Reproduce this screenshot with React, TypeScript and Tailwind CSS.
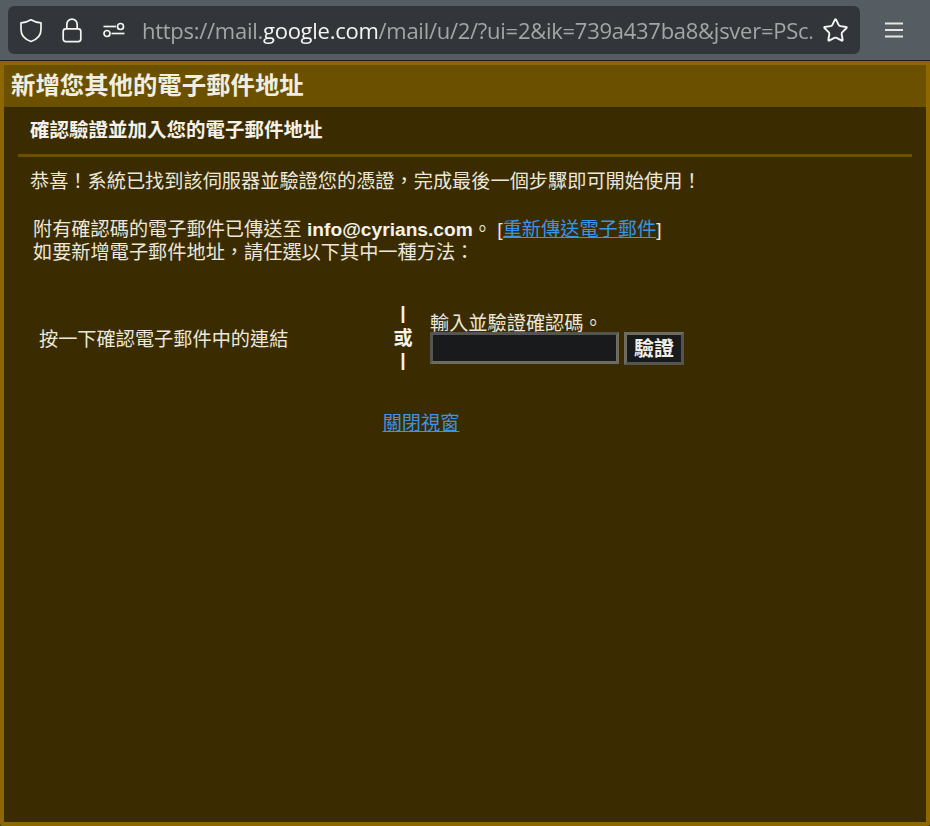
import { Star } from "lucide-react";

function ShieldIcon() {
  return (
    <svg width="24" height="25" viewBox="0 0 24 25" fill="none" stroke="currentColor" strokeWidth="1.7" strokeLinejoin="round">
      <path d="M12 1.800c3 1.900 6.200 2.800 10 3.100v6.600c0 5.800-3.600 9.800-10 12-6.400-2.200-10-6.200-10-12V4.900c3.800-.3 7-1.200 10-3.100z" />
    </svg>
  );
}

function LockIcon() {
  return (
    <svg width="20" height="25" viewBox="0 0 20 25" fill="none" stroke="currentColor" strokeWidth="1.7" strokeLinejoin="round">
      <rect x="1.200" y="10.800" width="17.600" height="12.800" rx="2.500" />
      <path d="M4.800 10.800V6.400a5.200 5.200 0 0 1 10.400 0v4.400" />
    </svg>
  );
}

function PermissionsIcon() {
  return (
    <svg width="22" height="16" viewBox="0 0 22 16" fill="none" stroke="currentColor" strokeWidth="1.700">
      <path d="M0.500 4.500h12.500" />
      <circle cx="17.500" cy="4.500" r="3" />
      <circle cx="4" cy="11.500" r="3" />
      <path d="M8.500 11.500h13" />
    </svg>
  );
}

function MenuIcon() {
  return (
    <svg width="18" height="16" viewBox="0 0 18 16" fill="none" stroke="currentColor" strokeWidth="1.900">
      <path d="M0 1.500h18M0 8h18M0 14.500h18" />
    </svg>
  );
}

function BrowserBar() {
  return (
    <div className="h-[60px] bg-[#565d62] flex items-center pl-2 pr-[26px] border-b border-[#1c1f21] box-content">
      <div className="w-[852px] h-[48px] bg-[#32363a] rounded-md flex items-center pl-[11px] pr-[11px] text-[#f4f4f0]">
        <ShieldIcon />
        <span className="ml-[19px]"><LockIcon /></span>
        <span className="ml-[21px]"><PermissionsIcon /></span>
        <div className="ml-[17px] flex-1 overflow-hidden whitespace-nowrap text-[22px] tracking-[-0.27px] text-[#a3a5a6] font-['Open_Sans',sans-serif] [mask-image:linear-gradient(to_left,transparent,black_8px)]">
          https://mail.<span className="text-[#f4f4f4]">google.com</span>/mail/u/2/?ui=2&amp;ik=739a437ba8&amp;jsver=PSc.
        </div>
        <Star size={27} strokeWidth={1.700} className="ml-[4px] shrink-0" />
      </div>
      <span className="ml-[25px] text-[#e6e6e2]"><MenuIcon /></span>
    </div>
  );
}

export default function App() {
  return (
    <div className="w-[930px] h-[826px] overflow-hidden bg-[#33383c] font-['Liberation_Sans','Noto_Sans_CJK_TC',sans-serif]">
      <BrowserBar />
      <div className="h-[765px] border-4 border-[#8f6700] rounded-b-[3px] bg-[#3a2c00] text-[#ebe7dc] flex flex-col">
        <h1 className="h-[42px] bg-[#6b5000] flex items-center pl-[7px] text-[24.4px] font-bold text-[#f0eee2]">
          新增您其他的電子郵件地址
        </h1>
        <div className="pl-[14px] pr-[14px]">
          <h2 className="h-[50px] pl-3 flex items-center border-b-[3px] border-[#6b5000] text-[19.5px] font-bold text-[#f4f2ea]">
            確認驗證並加入您的電子郵件地址
          </h2>
          <p className="pl-3 mt-[12px] text-[19.2px] leading-[26px]">
            恭喜！系統已找到該伺服器並驗證您的憑證，完成最後一個步驟即可開始使用！
          </p>
          <div className="pl-[15px] mt-[23px] text-[19.2px] leading-[23px]">
            <p>
              附有確認碼的電子郵件已傳送至 <b className="text-[#f4f2ea]">info@cyrians.com</b>。 [
              <a href="#" className="text-[#3b94e6] underline">重新傳送電子郵件</a>]
            </p>
            <p>如要新增電子郵件地址，請任選以下其中一種方法：</p>
          </div>
          <div className="mt-[38px] flex items-start">
            <div className="w-[375px] pl-[21px] mt-[26px] text-[19.2px] leading-[24px]">按一下確認電子郵件中的連結</div>
            <div className="w-[20px] flex flex-col items-center text-[19.2px] font-bold text-[#f4f2ea]">
              <span className="leading-[22px]">|</span>
              <span className="leading-[29px]">或</span>
              <span className="leading-[13px]">|</span>
            </div>
            <div className="ml-[17px] mt-[13px]">
              <div className="text-[19.2px] leading-[17px]">輸入並驗證確認碼。</div>
              <div className="flex items-start">
                <input className="w-[189px] h-[32px] bg-[#181a1c] border-[3px] border-t-[#55554f] border-l-[#55554f] border-r-[#6e6c62] border-b-[#6e6c62] outline-none" />
                <button className="ml-[5px] w-[60px] h-[33px] bg-[#181a1c] border-[3px] border-t-[#6e6c62] border-l-[#6e6c62] border-r-[#55554f] border-b-[#55554f] text-[20px] font-bold text-[#f0eee8] flex items-center justify-center">
                  驗證
                </button>
              </div>
            </div>
          </div>
          <div className="mt-[46px] text-center pr-[88px] text-[19.2px] leading-[24px]">
            <a href="#" className="text-[#3b94e6] underline">關閉視窗</a>
          </div>
        </div>
      </div>
    </div>
  );
}
